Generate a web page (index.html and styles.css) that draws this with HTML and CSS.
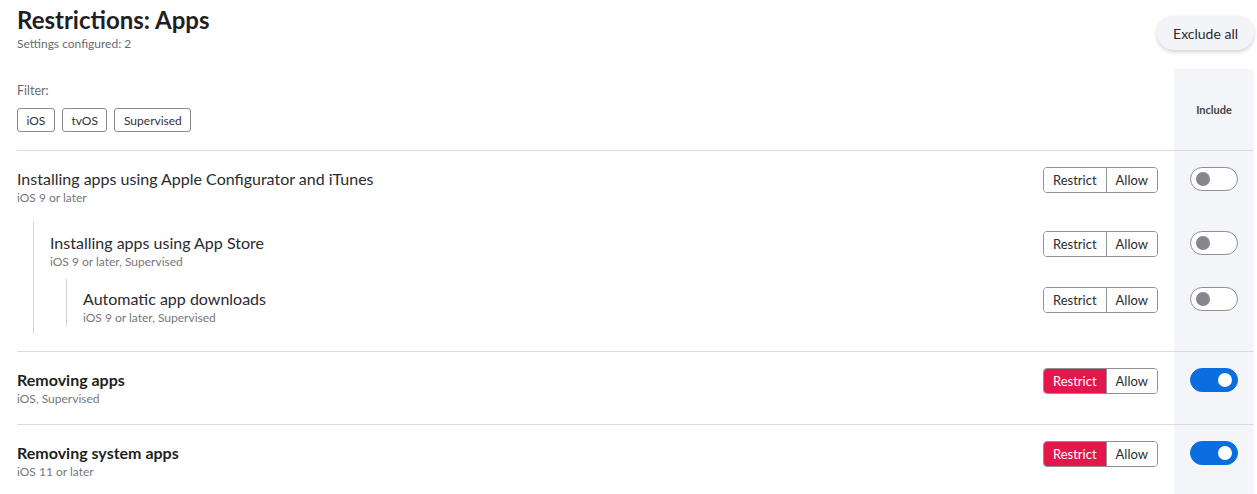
FILE: index.html
```html
<!DOCTYPE html>
<html lang="en">
<head>
  <meta charset="UTF-8">
  <title>Restrictions: Apps</title>
  <link rel="stylesheet" href="styles.css">
</head>
<body>

  <div class="page-head">
    <div>
      <h1>Restrictions: Apps</h1>
      <div class="configured">Settings configured: 2</div>
    </div>
    <button class="exclude-btn">Exclude all</button>
  </div>

  <div class="settings">

    <div class="filter-row">
      <div class="filter">
        <div class="filter-label">Filter:</div>
        <div class="chips">
          <button class="chip">iOS</button>
          <button class="chip">tvOS</button>
          <button class="chip">Supervised</button>
        </div>
      </div>
      <div class="include-head">Include</div>
    </div>

    <!-- installing apps -->
    <div class="section">
      <div class="row">
        <div class="row-text">
          <div class="row-title">Installing apps using Apple Configurator and iTunes</div>
          <div class="row-sub">iOS 9 or later</div>
        </div>
        <div class="seg">
          <button>Restrict</button><button>Allow</button>
        </div>
        <div class="include-cell"><span class="toggle"></span></div>
      </div>

      <div class="nested">
        <div class="row">
          <div class="row-text">
            <div class="row-title">Installing apps using App Store</div>
            <div class="row-sub">iOS 9 or later, Supervised</div>
          </div>
          <div class="seg">
            <button>Restrict</button><button>Allow</button>
          </div>
          <div class="include-cell"><span class="toggle"></span></div>
        </div>

        <div class="nested nested-inner">
          <div class="row">
            <div class="row-text">
              <div class="row-title">Automatic app downloads</div>
              <div class="row-sub">iOS 9 or later, Supervised</div>
            </div>
            <div class="seg">
              <button>Restrict</button><button>Allow</button>
            </div>
            <div class="include-cell"><span class="toggle"></span></div>
          </div>
        </div>
      </div>
    </div>

    <!-- removing apps -->
    <div class="section">
      <div class="row">
        <div class="row-text">
          <div class="row-title bold">Removing apps</div>
          <div class="row-sub">iOS, Supervised</div>
        </div>
        <div class="seg">
          <button class="on">Restrict</button><button>Allow</button>
        </div>
        <div class="include-cell"><span class="toggle on"></span></div>
      </div>
    </div>

    <div class="section">
      <div class="row">
        <div class="row-text">
          <div class="row-title bold">Removing system apps</div>
          <div class="row-sub">iOS 11 or later</div>
        </div>
        <div class="seg">
          <button class="on">Restrict</button><button>Allow</button>
        </div>
        <div class="include-cell"><span class="toggle on"></span></div>
      </div>
    </div>

  </div>

</body>
</html>
```

FILE: styles.css
```css
body {
  margin: 0;
  padding: 0 3px 0 17px;
  font-family: Lato, "Liberation Sans", sans-serif;
  color: #222;
  background: #fff;
}

button {
  font-family: inherit;
  cursor: pointer;
}

/* ヘッダー */
.page-head {
  display: flex;
  justify-content: space-between;
  align-items: flex-start;
  padding-top: 4px;
}

h1 {
  margin: 0;
  font-size: 24px;
  line-height: 32px;
  font-weight: 700;
  color: #1f1f21;
}

.configured {
  font-size: 12px;
  line-height: 16px;
  color: #6b6b70;
}

.exclude-btn {
  margin-top: 12px;
  height: 34px;
  padding: 0 16px;
  border: none;
  border-radius: 17px;
  background-color: #f3f4f8;
  box-shadow: 0 2px 4px rgba(0, 0, 0, 0.18);
  font-size: 14px;
  color: #2a2a2e;
}

/* 一覧 */
.settings {
  margin-top: 17px;
  background: linear-gradient(to right, transparent calc(100% - 80px), #f4f5f9 calc(100% - 80px));
  border-top-right-radius: 4px;
  min-height: 425px;
}

.filter-row {
  display: flex;
}

.filter {
  flex: 1;
  padding: 14px 0 18px;
}

.filter-label {
  font-size: 12.5px;
  line-height: 16px;
  color: #6b6b70;
}

.chips {
  display: flex;
  gap: 7px;
  margin-top: 9px;
}

.chip {
  height: 24px;
  padding: 0 8.5px;
  border: 1px solid #8a8a8f;
  border-radius: 3px;
  background: #fff;
  font-size: 12px;
  color: #333;
}

.include-head {
  width: 80px;
  align-self: center;
  text-align: center;
  font-size: 11px;
  font-weight: 700;
  color: #444;
}

.section {
  border-top: 1px solid #dcdcdf;
  padding: 18px 0 17px;
}

.row {
  display: flex;
  align-items: flex-start;
}

.row-text {
  flex: 1;
}

.row-title {
  font-size: 16px;
  line-height: 20px;
  color: #2b2b2f;
}

.row-title.bold {
  font-weight: 700;
  color: #1f1f21;
}

.row-sub {
  margin-top: 1px;
  font-size: 12px;
  line-height: 16px;
  color: #77777c;
}

.nested {
  margin: 16px 0 0 16px;
  padding: 11px 0 8px 16px;
  border-left: 1px solid #d4d4d8;
}

.nested-inner {
  margin-top: 9px;
  padding: 10px 0 0 16px;
}

/* Restrict / Allow */
.seg {
  display: flex;
  margin-top: -2px;
  margin-right: 16px;
  border: 1px solid #8e8e93;
  border-radius: 4px;
  overflow: hidden;
}

.seg button {
  height: 24px;
  padding: 0 9px;
  border: none;
  background: #fff;
  font-size: 13px;
  color: #2b2b2f;
}

.seg button + button {
  border-left: 1px solid #8e8e93;
}

.seg button.on {
  background-color: #e3174b;
  color: #fff;
}

.include-cell {
  width: 80px;
  display: flex;
  justify-content: center;
  margin-top: -2px;
}

.toggle {
  position: relative;
  width: 48px;
  height: 24px;
  box-sizing: border-box;
  border: 1px solid #8e8e93;
  border-radius: 12px;
  background: #fff;
}

.toggle::after {
  content: "";
  position: absolute;
  top: 4px;
  left: 5px;
  width: 14px;
  height: 14px;
  border-radius: 50%;
  background: #86868c;
}

.toggle.on {
  border-color: #0a6ee0;
  background-color: #0a6ee0;
}

.toggle.on::after {
  left: auto;
  right: 5px;
  background: #fff;
}
```
